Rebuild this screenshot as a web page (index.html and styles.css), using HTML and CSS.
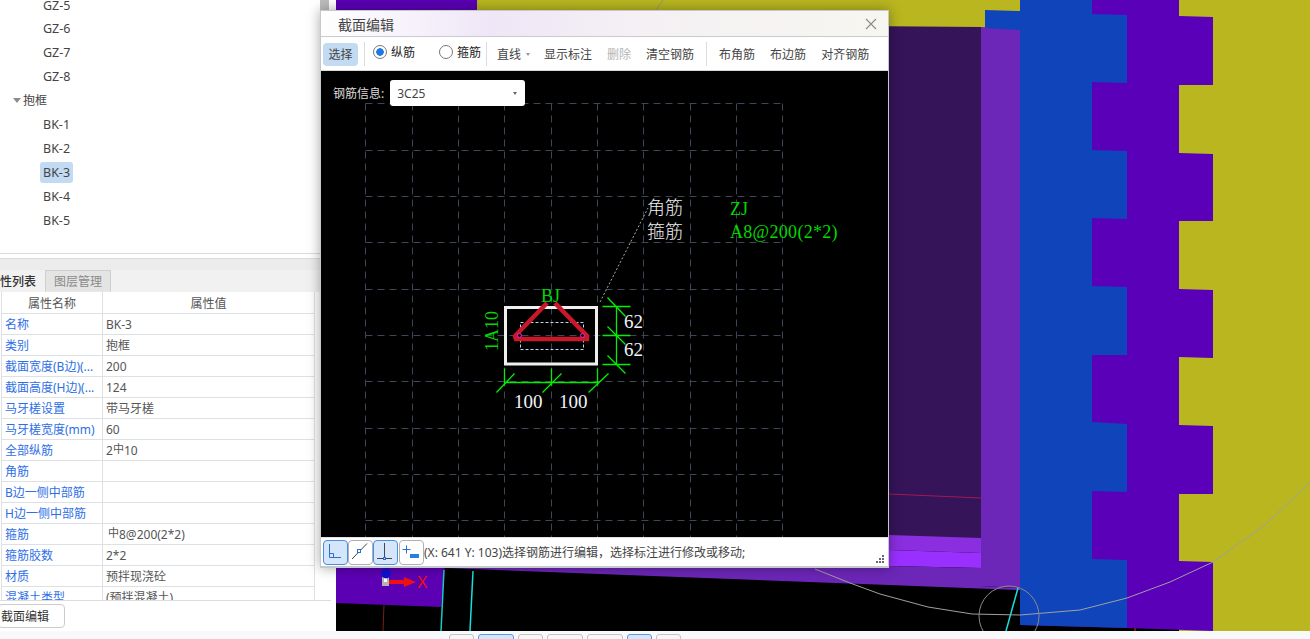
FILE: index.html
```html
<!DOCTYPE html>
<html lang="zh">
<head>
<meta charset="utf-8">
<title>截面编辑</title>
<link rel="stylesheet" href="styles.css">
</head>
<body>
<div class="app">
  <aside class="left">
    <div class="panel">
      <div class="tree">
        <div class="node">GZ-5</div>
        <div class="node">GZ-6</div>
        <div class="node">GZ-7</div>
        <div class="node">GZ-8</div>
        <div class="group"><span class="caret"></span>抱框</div>
        <div class="node">BK-1</div>
        <div class="node">BK-2</div>
        <div class="node"><span class="sel">BK-3</span></div>
        <div class="node">BK-4</div>
        <div class="node">BK-5</div>
      </div>
      <div class="band"></div>
      <div class="tabs">
        <div class="tab active"><span class="clip">属性列表</span></div>
        <div class="tab">图层管理</div>
      </div>
      <div class="gridwrap">
        <table class="props">
          <colgroup><col class="c1"><col class="c2"></colgroup>
          <tr class="head"><th>属性名称</th><th>属性值</th></tr>
          <tr><td>名称</td><td>BK-3</td></tr>
          <tr><td>类别</td><td>抱框</td></tr>
          <tr><td>截面宽度(B边)(...</td><td>200</td></tr>
          <tr><td>截面高度(H边)(...</td><td>124</td></tr>
          <tr><td>马牙槎设置</td><td>带马牙槎</td></tr>
          <tr><td>马牙槎宽度(mm)</td><td>60</td></tr>
          <tr><td>全部纵筋</td><td>2<span class="steel">中</span>10</td></tr>
          <tr><td>角筋</td><td></td></tr>
          <tr><td>B边一侧中部筋</td><td></td></tr>
          <tr><td>H边一侧中部筋</td><td></td></tr>
          <tr><td>箍筋</td><td><span class="steel first">中</span>8@200(2*2)</td></tr>
          <tr><td>箍筋胶数</td><td>2*2</td></tr>
          <tr><td>材质</td><td>预拌现浇砼</td></tr>
          <tr><td>混凝土类型</td><td>(预拌混凝土)</td></tr>
        </table>
      </div>
      <div class="actions"><button class="editbtn">截面编辑</button></div>
    </div>
    <div class="gutter"><div class="thumb"></div></div>
  </aside>
  <main class="scene">
    <svg class="model" width="974" height="631" viewBox="336 0 974 631">
      <rect x="336" y="0" width="974" height="631" fill="#000"/>
      <rect x="477" y="0" width="833" height="40" fill="#b9b620"/>
      <rect x="1179" y="0" width="131" height="631" fill="#b9b620"/>
      <polygon points="336,0 477,0 477,30 336,30" fill="#5a00b4"/>
      <polygon points="336,22 981,27 981,540 336,530" fill="#35145a"/>
      <polygon points="889,535 981,538 981,553 889,550" fill="#8a2ee0"/>
      <polygon points="889,550 981,553 981,568 889,566" fill="#9a30ff"/>
      <polygon points="445,568 889,566 981,568 981,586 1020,588 1020,590 889,585" fill="#6c26b8"/>
      <polygon points="981,27 1020,29 1020,588 981,586" fill="#6c26b8"/>
      <polygon points="336,566 445,566 441,607 336,603" fill="#5c00b4"/>
      <polygon points="985,10 1020,11 1020,30 985,28" fill="#1044bb"/>
      <polygon points="1092,0 1179,0 1179,16 1213,17 1213,85 1179,85 1179,153 1213,154 1213,221 1179,221 1179,289 1213,290 1213,358 1179,357 1179,425 1213,426 1213,494 1179,494 1179,561 1213,562 1213,631 1127,628 1020,625 1020,0" fill="#5a00b9"/>
      <polygon points="1020,0 1092,0 1092,14 1127,15 1127,83 1092,82 1092,150 1127,151 1127,219 1092,218 1092,286 1127,287 1127,355 1092,355 1092,422 1127,424 1127,492 1092,491 1092,559 1127,560 1127,628 1020,625" fill="#1044bb"/>
      <line x1="889" y1="494" x2="981" y2="498" stroke="#a01a50"/>
      <line x1="663" y1="0" x2="656" y2="10" stroke="#9a9a60"/>
      <line x1="444" y1="570" x2="441" y2="631" stroke="#19c8c8" stroke-width="1.5"/>
      <line x1="473" y1="571" x2="470" y2="631" stroke="#19e0e0" stroke-width="1.5"/>
      <line x1="384" y1="605" x2="383" y2="631" stroke="#7a2010"/>
      <line x1="1018" y1="588" x2="1006" y2="631" stroke="#19e0e0" stroke-width="1.5"/>
      <line x1="1135" y1="628" x2="1135" y2="631" stroke="#c04010"/>
      <polyline points="815,569 850,583 880,594 928,607 972,614 1020,615 1080,610 1127,598 1170,582 1213,562 1265,525 1310,482" fill="none" stroke="#a0a0a0" stroke-linejoin="round"/>
      <circle cx="1009" cy="616" r="30" fill="none" stroke="#8a8a8a"/>
      <rect x="382" y="577" width="7" height="9" fill="#b4b4b4"/>
      <rect x="384" y="577" width="3" height="5" fill="#fff"/>
      <circle cx="386" cy="573.500" r="5" fill="#1010d0"/>
      <polygon points="389,580 404,580 404,577 416,582 404,587 404,584 389,584" fill="#f01010"/>
      <text class="axis" x="417" y="588">X</text>
    </svg>
  </main>
</div>
<div class="strip">
  <span class="mini w25"></span><span class="mini w36 on"></span><span class="mini w25"></span><span class="mini w36"></span><span class="mini w36"></span><span class="mini w25 on"></span><span class="mini w25"></span>
</div>

<section class="dialog">
  <header class="title"><span>截面编辑</span>
    <svg class="close" width="12" height="12" viewBox="0 0 12 12"><path d="M1 1L11 11M11 1L1 11" stroke="#8a8a8a" stroke-width="1.1" fill="none"/></svg>
  </header>
  <div class="toolbar">
    <button class="tool selected">选择</button>
    <i class="sep s1"></i>
    <label class="radio r1"><i class="dot on"></i>纵筋</label>
    <label class="radio r2"><i class="dot"></i>箍筋</label>
    <i class="sep s2"></i>
    <span class="drop">直线<i class="mini-caret"></i></span>
    <span class="act a1">显示标注</span>
    <span class="act off a2">删除</span>
    <span class="act a3">清空钢筋</span>
    <i class="sep s3"></i>
    <span class="act a4">布角筋</span>
    <span class="act a5">布边筋</span>
    <span class="act a6">对齐钢筋</span>
  </div>
  <div class="canvas">
    <svg class="drawing" width="567" height="466" viewBox="321 71 567 466">
      <g class="grid">
        <path d="M365 103V537M412 103V537M458 103V537M504 103V537M551 103V537M597 103V537M643 103V537M690 103V537M736 103V537M782 103V537"/>
        <path d="M365 103H782M365 150H782M365 196H782M365 242H782M365 289H782M365 335H782M365 381H782M365 428H782M365 474H782M365 520H782"/>
      </g>
      <path class="leader" d="M600 302L648 208"/>
      <rect class="inner" x="520.500" y="322.500" width="63" height="27"/>
      <rect class="outline" x="505.500" y="307.500" width="91" height="56.500"/>
      <path class="bar" d="M547 303L515 336L516 339H587L587 336L555 303"/>
      <circle class="node-dot" cx="519.500" cy="335.500" r="2"/>
      <circle class="node-dot" cx="582.500" cy="335.500" r="2"/>
      <g class="dim">
        <path d="M504 368V385M551 368V385M597 368V385M504 382H598M496 392L514 373M542 392L561 373M588 392L608 373"/>
        <path d="M616 306V364M602 306H630M602 335H630M602 364H630M607 297L625 316M607 326L625 344M607 355L625 373"/>
      </g>
      <text class="t-green" x="541" y="302">BJ</text>
      <text class="t-green" transform="translate(498 351) rotate(-90)">1A10</text>
      <text class="t-white" x="624" y="328">62</text>
      <text class="t-white" x="624" y="356">62</text>
      <text class="t-white" x="514" y="408">100</text>
      <text class="t-white" x="559" y="408">100</text>
      <text class="t-cjk" x="647" y="214">角筋</text>
      <text class="t-cjk" x="647" y="238">箍筋</text>
      <text class="t-green" x="730" y="215">ZJ</text>
      <text class="t-green wide" x="730" y="238">A8@200(2*2)</text>
    </svg>
    <div class="info">
      <span class="info-label">钢筋信息:</span>
      <div class="select"><span>3C25</span><i class="mini-caret dark"></i></div>
    </div>
  </div>
  <footer class="status">
    <button class="snap on"><svg width="23" height="23" viewBox="0 0 23 23"><path d="M5.500 3V16.500H17M5.500 12.500H9.500V16.500" fill="none" stroke="#2b6fd0"/></svg></button>
    <button class="snap"><svg width="23" height="23" viewBox="0 0 23 23"><path d="M3 18L18 2.500" stroke="#445" fill="none"/><rect x="8.500" y="8.500" width="3" height="3" fill="#fff" stroke="#2b6fd0"/></svg></button>
    <button class="snap on"><svg width="23" height="23" viewBox="0 0 23 23"><path d="M10.500 2V17.500M3 17.500H18" stroke="#445" fill="none"/><rect x="9.500" y="16.500" width="2" height="2" fill="#d6e6fa" stroke="#2b6fd0"/></svg></button>
    <button class="snap gap"><svg width="23" height="23" viewBox="0 0 23 23"><path d="M6.500 4.500V12.500M2.500 8.500H10.500" stroke="#2b6fd0" fill="none"/><rect x="10" y="13" width="9" height="4" fill="#2b7fe0"/></svg></button>
    <span class="msg">(X: 641 Y: 103)选择钢筋进行编辑，选择标注进行修改或移动;</span>
    <svg class="grip" width="9" height="9" viewBox="0 0 9 9"><path d="M6 0h2v2H6zM3 3h2v2H3zM6 3h2v2H6zM0 6h2v2H0zM3 6h2v2H3zM6 6h2v2H6z" fill="#667"/></svg>
  </footer>
</section>
</body>
</html>
```
FILE: styles.css
```css
* { box-sizing: border-box; }
html, body { margin: 0; padding: 0; height: 100%; overflow: hidden; }
body { width: 1310px; height: 639px; position: relative; background: #f8f9fa; font: 12px "Noto Sans", "Noto Sans CJK SC", sans-serif; color: #444; }
button { font: inherit; color: inherit; }

.app { display: flex; height: 631px; }
.left { display: flex; width: 336px; flex: none; background: #fff; }
.panel { width: 320px; flex: none; display: flex; flex-direction: column; overflow: hidden; height: 631px; }
.gutter { flex: 1; background: linear-gradient(#dcdcdc, #dcdcdc) 0 600px / 11px 1px no-repeat, #fff; }
.thumb { width: 9px; height: 12px; background: #bcbcbc; }

.tree { height: 254px; flex: none; border-bottom: 1px solid #dcdcdc; overflow: hidden; position: relative; }
.node, .group { height: 24px; line-height: 24px; color: #444; }
.node { padding-left: 43px; font-size: 12.5px; position: relative; top: 1px; }
.node:first-child { margin-top: -8px; padding-top: 1px; }
.group { padding-left: 13px; display: flex; align-items: center; padding-top: 1px; }
.caret { width: 0; height: 0; border: 4px solid transparent; border-top: 5px solid #8c8c8c; border-bottom: 0; margin-right: 2px; }
.sel { display: inline-block; background: #c2daf2; border-radius: 3px; height: 21px; line-height: 21px; padding: 0 3px; margin-left: -3px; }

.band { height: 16px; flex: none; background: #fff linear-gradient(#fff 4px, #dcdcdc 4px, #dcdcdc 5px, #ececec 5px); }
.tabs { height: 22px; flex: none; display: flex; background: #f1f1f1; }
.tab { height: 22px; line-height: 21px; color: #8a8a8a; padding: 0 8px; background: #e4e4e4; border: 1px solid #cfcfcf; border-bottom-color: #e8e8e8; }
.tab.active { width: 45px; padding: 0; background: #f1f1f1; color: #333; font-weight: 500; border: 0; overflow: hidden; }
.clip { display: block; width: 60px; margin-left: -12px; padding-top: 1px; }

.gridwrap { height: 309px; flex: none; overflow: hidden; border-bottom: 1px solid #dcdcdc; }
.props { table-layout: fixed; border-collapse: collapse; width: 314px; margin-left: 1px; background: #fff; }
.c1 { width: 101px; }
.props tr { height: 21px; }
.props th, .props td { border: 1px solid #dde1e4; border-top: 0; padding: 2px 3px 0; font-weight: 400; white-space: nowrap; overflow: hidden; line-height: 18px; height: 21px; color: #555; }
.props th { text-align: center; padding-top: 3px; line-height: 17px; }
.props td:first-child { color: #2e6fe6; }
.steel { font-size: 11px; margin: 0; position: relative; top: -2px; }
.steel.first { margin-left: 2px; }

.actions { height: 30px; flex: none; padding-top: 3px; }
.editbtn { display: block; margin-left: -2px; width: 67px; height: 24px; background: #fff; border: 1px solid #ccc; border-radius: 4px; padding: 0 0 0 2px; text-align: left; color: #333; }

.scene { flex: 1; overflow: hidden; background: #000; }
.model { display: block; }
.axis { font: 16px "Liberation Sans", sans-serif; fill: #f01010; }

.strip { height: 8px; display: flex; padding: 3px 0 0 449px; background: #f8f9fa; overflow: hidden; }
.mini { height: 10px; margin-right: 4px; border: 1px solid #c4c4c4; border-radius: 3px 3px 0 0; background: #f8f8f8; }
.mini.on { border-color: #5a9ae6; background: #d6e6fa; }
.w25 { width: 25px; }
.w36 { width: 36px; }

.dialog { position: absolute; left: 320px; top: 10px; width: 569px; height: 558px; display: flex; flex-direction: column; background: #fff; border: 1px solid #c5c9c9; border-width: 1px 1px 2px 1px; box-shadow: 0 0 12px rgba(0,0,0,.35); }
.title { height: 25px; flex: none; display: flex; align-items: center; justify-content: space-between; padding: 0 11px 0 17px; background: linear-gradient(90deg, #fff 0, #efe6f7 30%, #f4f0f4 55%, #f7f6f0 100%); font-size: 14px; color: #444; }
.toolbar { height: 34px; flex: none; position: relative; display: flex; align-items: center; border-top: 1px solid #c8cccc; background: #fff; padding: 1px 0 0 2px; }
.tool { width: 35px; height: 23px; padding: 0; border: 0; border-radius: 4px; color: #444; background: #c2daf2; }
.sep { width: 1px; height: 24px; background: #dcdcdc; flex: none; }
.s1 { margin-left: 6px; }
.radio { display: flex; align-items: center; color: #222; margin-bottom: 4px; }
.r1 { margin-left: 8px; }
.r2 { margin-left: 24px; }
.dot { display: block; width: 14px; height: 14px; margin-right: 4px; border: 1px solid #777; border-radius: 50%; background: #fff; }
.dot.on { background: radial-gradient(circle, #1f7ae0 0 3.5px, #fff 4px); }
.s2 { margin-left: 5px; }
.drop { margin-left: 10px; display: flex; align-items: center; color: #444; }
.mini-caret { display: block; width: 0; height: 0; border: 2.5px solid transparent; border-top: 3px solid #999; border-bottom: 0; margin-left: 5px; }
.act { color: #444; white-space: nowrap; }
.a1 { margin-left: 14px; }
.a2 { margin-left: 15px; }
.off { color: #b4b4b4; }
.a3 { margin-left: 15px; }
.s3 { margin-left: 12px; }
.a4 { margin-left: 12px; }
.a5 { margin-left: 15px; }
.a6 { margin-left: 15px; }

.canvas { height: 467px; flex: none; position: relative; background: #000; overflow: hidden; border-top: 1px solid #d8d8d8; }
.drawing { display: block; }
.grid { transform: translate(.5px, .5px); }
.grid path { fill: none; stroke: #3c4656; stroke-width: 1; stroke-dasharray: 7 5; }
.leader { fill: none; stroke: #aaa; stroke-dasharray: 2 2; }
.inner { fill: none; stroke: #bcd8f4; stroke-dasharray: 3 2; }
.outline { fill: none; stroke: #efefef; stroke-width: 3; }
.bar { fill: none; stroke: #c8182a; stroke-width: 4.5; }
.node-dot { fill: #000; stroke: #ff20e0; stroke-width: 1; }
.dim { transform: translate(.5px, .5px); }
.dim path { fill: none; stroke: #00f000; stroke-width: 1.3; }
.t-green { font: 18px "Liberation Serif", serif; fill: #00d800; }
.wide { letter-spacing: .3px; }
.t-white { font: 19px "Liberation Serif", serif; fill: #f0f4fa; }
.t-cjk { font: 300 18px "Liberation Serif", "Noto Sans CJK SC", serif; fill: #f0f0f0; }
.info { position: absolute; left: 12px; top: 9px; display: flex; align-items: center; }
.info-label { color: #ddd; margin-right: 6px; }
.select { width: 135px; height: 26px; border-radius: 3px; background: #fff; padding: 0 8px 0 7px; display: flex; align-items: center; justify-content: space-between; color: #444; }
.mini-caret.dark { border-top-color: #666; margin: 0; }

.status { flex: 1; display: flex; align-items: center; padding-left: 2px; background: #fff; position: relative; border-top: 1px solid #e2e2e2; }
.snap { width: 25px; height: 25px; padding: 0; border: 1px solid #b0b0b0; border-radius: 4px; background: #fff; display: flex; align-items: center; justify-content: center; flex: none; }
.snap svg { display: block; flex: none; }
.snap.on { border-color: #4a90e2; background: #d6e6fa; }
.snap.gap { margin-left: 1px; }
.msg { margin-left: 0; color: #444; white-space: nowrap; }
.grip { position: absolute; right: 3px; bottom: 2px; }
```
